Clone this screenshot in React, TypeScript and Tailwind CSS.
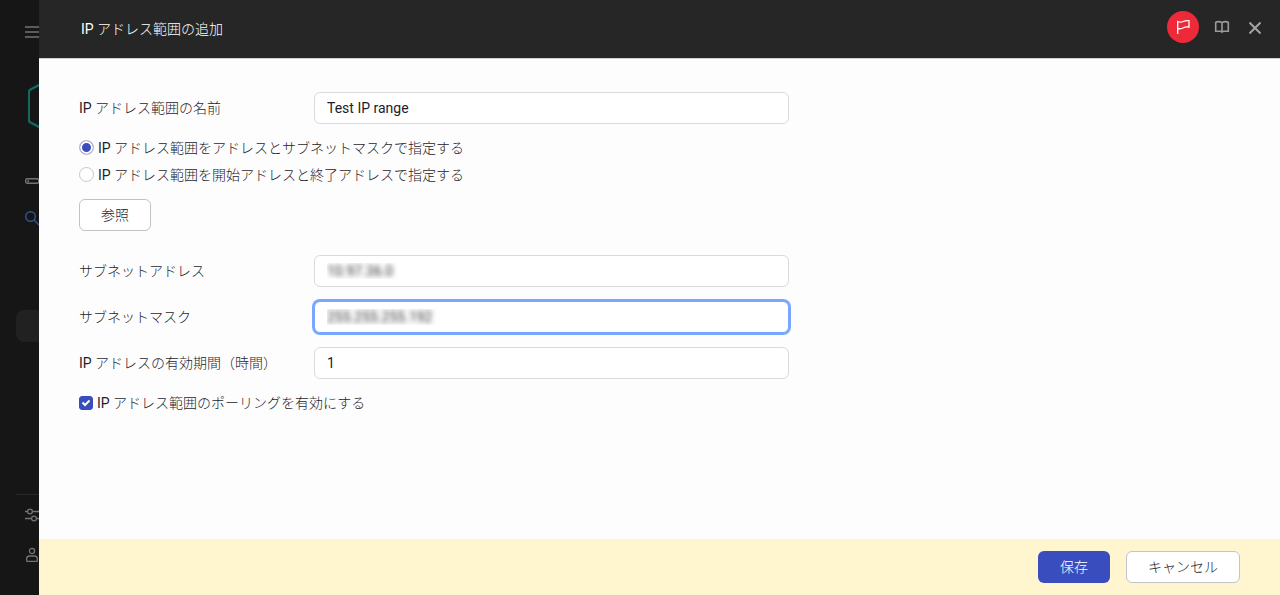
import { useState } from 'react'
import type { ComponentProps } from 'react'

const inputBase = 'h-8 w-full rounded-md border bg-white px-3 outline-none'

function Field({ id, label, className = 'border-[#d6dbdf]', ...props }: ComponentProps<'input'> & { label: string }) {
  return (
    <div className="flex items-center">
      <label htmlFor={id} className="w-[235px] shrink-0">{label}</label>
      <div className="max-w-[475px] flex-1">
        <input id={id} type="text" className={`${inputBase} ${className}`} {...props} />
      </div>
    </div>
  )
}

function Sidebar() {
  return (
    <aside className="flex w-[39px] shrink-0 flex-col overflow-hidden bg-[#161616] text-[#747474]">
      {/* Menu */}
      <button type="button" aria-label="メニュー" className="ml-[25px] mt-6 h-4 w-4">
        <svg width="16" height="16" viewBox="0 0 16 16" stroke="currentColor" strokeWidth="1.5">
          <path d="M0 3h16M0 8h16M0 13h16" />
        </svg>
      </button>

      {/* Product logo */}
      <svg className="ml-7 mt-[38px] shrink-0" width="48" height="56" viewBox="0 0 48 56" fill="none" stroke="#126a5c" strokeWidth="2.4">
        <path d="M22 1.500 2.500 11.500q-1.700 1-1.700 3v27q0 2 1.700 3l19.500 10q2 1 4 0l19.500-10q1.700-1 1.700-3v-27q0-2-1.700-3L26 1.500q-2-1-4 0z" />
      </svg>

      <nav className="mt-[42px] flex flex-col">
        <a href="#server" aria-label="サーバー" className="ml-[25px] h-4 w-4">
          <svg className="overflow-visible" width="16" height="12" viewBox="0 0 16 12" fill="none" stroke="currentColor" strokeWidth="1.400">
            <rect x=".7" y="2.700" width="13" height="4.600" rx="1.500" />
            <path d="M3.200 4v2.500" />
          </svg>
        </a>
        <a href="#discovery" aria-label="検出" className="ml-[25px] mt-[19px] h-4 w-4 text-[#34528c]">
          <svg width="16" height="16" viewBox="0 0 16 16" fill="none" stroke="currentColor" strokeWidth="1.400">
            <circle cx="5.500" cy="5.500" r="4.800" />
            <path d="m9 9 6 6" />
          </svg>
        </a>
        <a href="#range" aria-label="IP アドレス範囲" className="ml-4 mt-[83px] h-8 w-16 rounded-lg bg-[#212121]" />
      </nav>

      <div className="ml-4 mt-auto border-t border-[#292929]" />
      <a href="#settings" aria-label="設定" className="ml-[25px] mt-3 h-4 w-4">
        <svg width="16" height="16" viewBox="0 0 16 16" fill="none" stroke="currentColor" strokeWidth="1.300">
          <path d="M0 4.500h2.500m5 0H16M0 11.500h6.500m5 0H16" />
          <circle cx="5" cy="4.500" r="2.400" />
          <circle cx="9" cy="11.500" r="2.400" />
        </svg>
      </a>
      <a href="#account" aria-label="アカウント" className="mb-8 ml-[25px] mt-6 h-4 w-4">
        <svg width="14" height="16" viewBox="0 0 14 16" fill="none" stroke="currentColor" strokeWidth="1.300">
          <circle cx="7" cy="4" r="2.600" />
          <path d="M1.600 13.500v-1.500q0-3 3-3h4.800q3 0 3 3v1.500q0 .9-.9.9h-9q-.9 0-.9-.9z" />
        </svg>
      </a>
    </aside>
  )
}

function Header() {
  return (
    <header className="flex h-[58px] items-center bg-[#262626] pl-[42px] pr-[19px] text-white">
      <h1 className="flex-1">IP アドレス範囲の追加</h1>
      <div className="mb-1 flex items-center">
        <button type="button" aria-label="フラグ" className="flex h-8 w-8 items-center justify-center rounded-full bg-[#ee2938]">
          <svg width="16" height="16" viewBox="0 0 16 16" fill="none" stroke="white" strokeWidth="1.300">
            <path d="M2.700 15V2.500q3 1.300 5.500 0t5.800-.8v6.500q-3-.8-5.500.6t-5.800.7" />
          </svg>
        </button>
        <button type="button" aria-label="ヘルプ" className="ml-[15px] h-4 w-4">
          <svg width="16" height="16" viewBox="0 0 16 16" fill="none" stroke="#9a9a9a" strokeWidth="1.600">
            <path d="M8 3.700Q6.500 2.600 4.500 2.600T1.700 3.300v9h4.500q1.300 0 1.800.8.500-.8 1.800-.8h4.500v-9q-.8-.7-2.800-.7T8 3.700zM8 3.700v9" />
          </svg>
        </button>
        <button type="button" aria-label="閉じる" className="ml-[19px] mt-px h-3 w-3">
          <svg width="12" height="12" viewBox="0 0 12 12" stroke="#a3a3a3" strokeWidth="2">
            <path d="m.5.5 11 11M11.500.5l-11 11" />
          </svg>
        </button>
      </div>
    </header>
  )
}

export default function App() {
  const [mode, setMode] = useState('mask')
  const [polling, setPolling] = useState(true)

  const modes = [
    { value: 'mask', label: 'IP アドレス範囲をアドレスとサブネットマスクで指定する' },
    { value: 'interval', label: 'IP アドレス範囲を開始アドレスと終了アドレスで指定する' },
  ]

  return (
    <div className="flex min-h-screen bg-[#161616] font-['Roboto','Noto_Sans_CJK_JP_Light','Noto_Sans_CJK_JP',sans-serif] text-sm font-normal text-[#1d1d2b]">
      <Sidebar />
      <div className="flex min-w-0 flex-1 flex-col bg-[#fdfdfd]">
        <Header />

        <main className="flex-1 border-t border-[#d0d0d0] px-10 pt-[33px]">
          <Field id="name" label="IP アドレス範囲の名前" defaultValue="Test IP range" />

          <fieldset className="mt-[10px]">
            {modes.map((item) => (
              <label key={item.value} className="flex h-[27px] items-center gap-1">
                <input
                  type="radio"
                  name="mode"
                  value={item.value}
                  checked={mode === item.value}
                  onChange={() => setMode(item.value)}
                  className="h-[15px] w-[15px] appearance-none rounded-full border border-[#c5c7d0] bg-white checked:bg-[#3a4dbf] checked:shadow-[inset_0_0_0_2px_white]"
                />
                {item.label}
              </label>
            ))}
          </fieldset>

          <button type="button" className="mt-[11px] h-8 w-[72px] rounded-md border border-[#c2c2c4] bg-white">
            参照
          </button>

          <div className="mt-6 flex flex-col gap-[14px]">
            <Field
              id="subnet"
              label="サブネットアドレス"
              defaultValue="10.97.36.0"
              className="border-[#d6dbdf] text-transparent [text-shadow:0_0_5px_#333]"
            />
            <Field
              id="mask"
              label="サブネットマスク"
              defaultValue="255.255.255.192"
              className="border-[#79a6ff] text-transparent ring-2 ring-[#79a6ff] [text-shadow:0_0_5px_#333]"
            />
            <Field id="lifetime" label="IP アドレスの有効期間（時間）" defaultValue="1" />
          </div>

          <label className="mt-[10px] flex h-[27px] items-center gap-1">
            <span className="relative h-[14px] w-[14px]">
              <input
                type="checkbox"
                checked={polling}
                onChange={(e) => setPolling(e.target.checked)}
                className="block h-[14px] w-[14px] appearance-none rounded-[3px] border border-[#c5c7d0] bg-white checked:border-[#3a4dbf] checked:bg-[#3a4dbf]"
              />
              <svg className="pointer-events-none absolute inset-0" width="14" height="14" viewBox="0 0 14 14" fill="none" stroke="white" strokeWidth="2">
                <path d="m3.500 6.500 2.500 2.500 4.500-4.500" />
              </svg>
            </span>
            IP アドレス範囲のポーリングを有効にする
          </label>
        </main>

        <footer className="flex h-14 items-center justify-end gap-4 bg-[#fff5cf] px-10">
          <button type="submit" className="h-8 w-[72px] rounded-md bg-[#3a4dbf] text-white">保存</button>
          <button type="button" className="h-8 w-[114px] rounded-md border border-[#c2c4cc] bg-white">キャンセル</button>
        </footer>
      </div>
    </div>
  )
}
